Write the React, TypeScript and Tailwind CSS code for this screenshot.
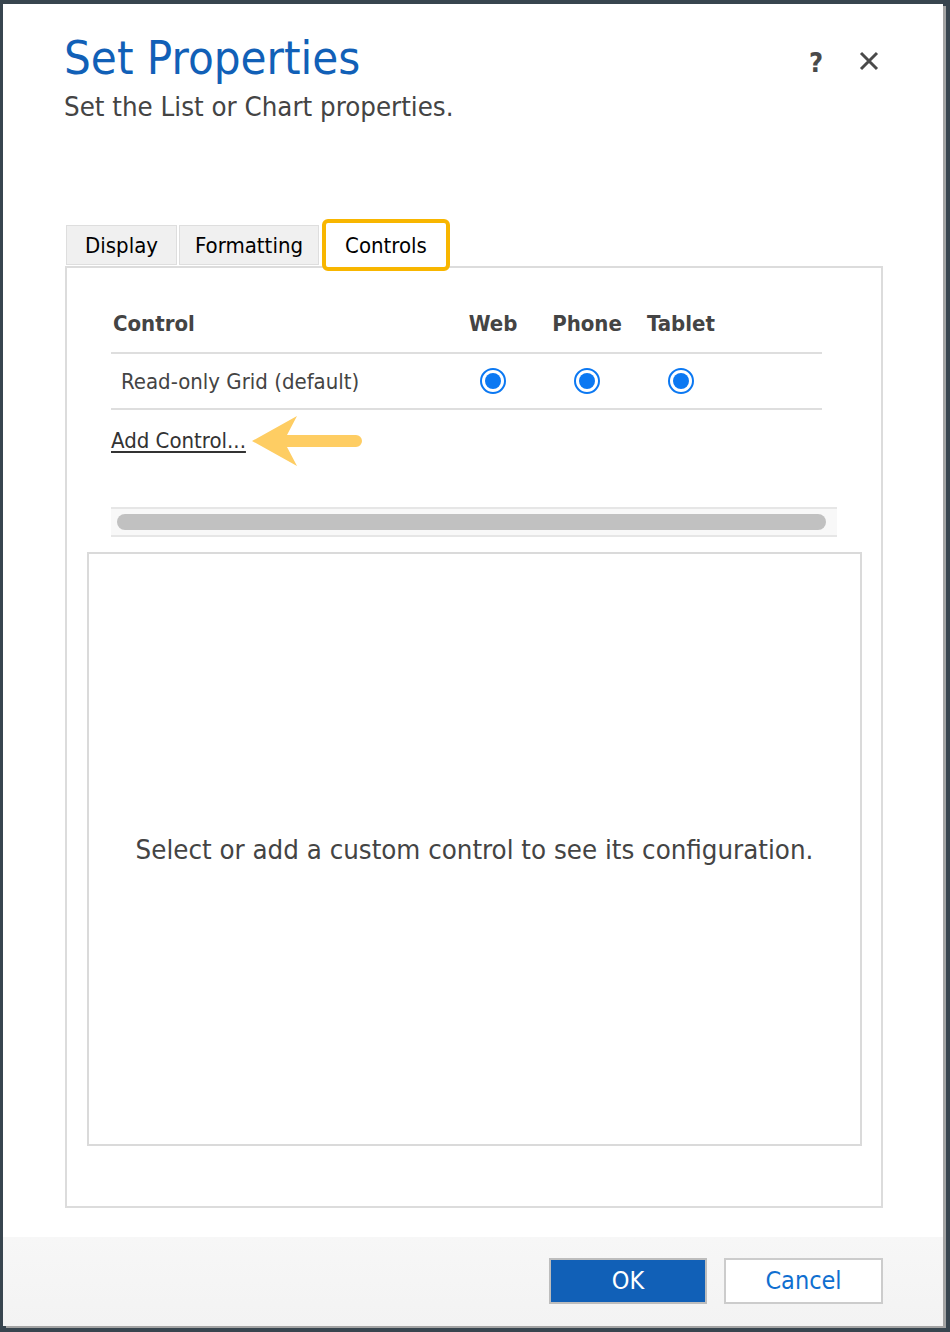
import React from "react";

const font = { fontFamily: '"DejaVu Sans Condensed", "DejaVu Sans", Tahoma, sans-serif' };

function Radio() {
  return (
    <div className="flex justify-center">
      <div className="w-[26px] h-[26px] rounded-full border-[2px] border-[#0b78f2] bg-white flex items-center justify-center">
        <div className="w-[16px] h-[16px] rounded-full bg-[#0b78f2]" />
      </div>
    </div>
  );
}

function Arrow() {
  return (
    <svg width="112" height="52" viewBox="0 0 112 52" className="ml-[6px]">
      <path d="M0 26 L45 1 L35 20 L104 20 A6 6 0 0 1 104 32 L35 32 L45 51 Z" fill="#fecd63" />
    </svg>
  );
}

export default function App() {
  return (
    <div className="w-[950px] h-[1332px] bg-[#38454f] pt-[4px] pl-[3px]" style={font}>
      <div className="w-[940px] h-[1322px] bg-white flex flex-col shadow-[3px_2px_0_#a3a3a3]">
        {/* header */}
        <div className="flex justify-between pl-[61px] pr-[64px] pt-[31px]">
          <div>
            <div className="text-[47px] leading-[46px] text-[#1160b7]">Set Properties</div>
            <div className="mt-[11px] text-[27.4px] leading-[30px] text-[#444]">Set the List or Chart properties.</div>
          </div>
          <div className="flex items-start gap-[36px] pt-[14px]">
            <span className="text-[27px] leading-[28px] font-bold text-[#4a4a4a]">?</span>
            <svg width="20" height="20" viewBox="0 0 20 20" className="mt-[2px]">
              <path d="M2 2 L18 18 M18 2 L2 18" stroke="#4a4a4a" strokeWidth="3" />
            </svg>
          </div>
        </div>

        {/* tabs */}
        <div className="mt-[97px] ml-[62px] h-[47px] flex items-start">
          <div className="mt-[6px] w-[111px] h-[40px] ml-[1px] bg-[#f0f0f0] border border-[#dedede] flex justify-center text-[22px] leading-[40px] text-black">
            Display
          </div>
          <div className="mt-[6px] ml-[2px] w-[140px] h-[40px] bg-[#f0f0f0] border border-[#dedede] flex justify-center text-[22px] leading-[40px] text-black">
            Formatting
          </div>
          <div className="relative z-10 ml-[3px] w-[128px] h-[52px] bg-white border-[4px] border-[#f8b600] rounded-[6px] flex justify-center text-[22px] leading-[45px] text-black">
            Controls
          </div>
        </div>

        {/* panel */}
        <div className="ml-[62px] w-[818px] h-[942px] border-[2px] border-[#dcdcdc]">
          <div className="pl-[44px]">
            <div className="w-[711px]">
              <div className="grid grid-cols-[335px_94px_94px_94px_1fr] pt-[42px] pb-[14px] text-[22px] leading-[28px] font-bold text-[#444] border-b-[2px] border-[#dedede]">
                <div className="pl-[2px]">Control</div>
                <div className="text-center">Web</div>
                <div className="text-center">Phone</div>
                <div className="text-center">Tablet</div>
                <div />
              </div>
              <div className="grid grid-cols-[335px_94px_94px_94px_1fr] h-[56px] items-center text-[22px] text-[#444] border-b-[2px] border-[#dedede]">
                <div className="pl-[10px]">Read-only Grid (default)</div>
                <Radio />
                <Radio />
                <Radio />
                <div />
              </div>
            </div>
            <div className="flex items-center mt-[5px] h-[52px]">
              <span className="text-[22px] leading-[28px] text-[#333] underline underline-offset-[3px]">Add Control...</span>
              <Arrow />
            </div>
            <div className="mt-[40px] w-[726px] h-[30px] bg-[#f8f8f8] border-y-[2px] border-[#e6e6e6] flex items-center px-[6px]">
              <div className="w-[709px] h-[16px] rounded-full bg-[#c1c1c1]" />
            </div>
          </div>
          <div className="ml-[20px] mt-[15px] w-[775px] h-[594px] border-[2px] border-[#dadada] flex items-center justify-center">
            <span className="text-[27.4px] leading-[32px] text-[#444] pt-[2px]">Select or add a custom control to see its configuration.</span>
          </div>
        </div>

        {/* footer */}
        <div className="mt-[29px] flex-1 bg-gradient-to-b from-[#f7f7f7] to-[#f3f3f3] flex justify-end items-start pt-[21px] pr-[60px] gap-[17px]">
          <button className="w-[158px] h-[46px] bg-[#1160b7] border-[2px] border-[#bdbdbd] text-white text-[25px] leading-[42px]">OK</button>
          <button className="w-[159px] h-[46px] bg-white border-[2px] border-[#cccccc] text-[#0f6fd0] text-[25px] leading-[42px]">Cancel</button>
        </div>
      </div>
    </div>
  );
}
